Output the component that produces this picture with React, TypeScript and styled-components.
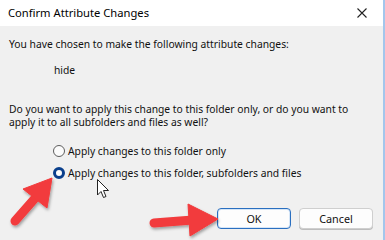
import React from 'react';
import styled, { createGlobalStyle } from 'styled-components';

const Global = createGlobalStyle`
    html, body {
        margin: 0;
        padding: 0;
        background: #f0f0f0;
    }
    body {
        font-family: "Noto Sans", "Liberation Sans", sans-serif;
        font-size: 10.3px;
        color: #111;
    }
`
const Dialog = styled.div`
    position: relative;
    width: 385px;
    height: 240px;
    box-sizing: border-box;
    border-right: 2px solid #a3c6ec;
    background: #f0f0f0;
    display: flex;
    flex-direction: column;
    overflow: hidden;
`
const TitleBar = styled.div`
    height: 26px;
    flex: none;
    background: #ffffff;
    display: flex;
    align-items: center;
    justify-content: space-between;
    padding: 0 8px 1px 8px;
    box-sizing: border-box;
    font-size: 11.2px;
    color: #000;
`
const CloseBox = styled.div`
    width: 20px;
    height: 20px;
    display: flex;
    align-items: center;
    justify-content: center;
    margin-right: 3px;
`
const Body = styled.div`
    padding: 11px 0 0 9px;
    display: flex;
    flex-direction: column;
`
const Line = styled.div`
    line-height: 14px;
    white-space: nowrap;
`
const Attr = styled(Line)`
    margin-top: 12px;
    padding-left: 45px;
`
const Question = styled.div`
    margin-top: 26px;
    line-height: 13px;
    white-space: nowrap;
`
const Options = styled.div`
    margin-top: 14px;
    padding-left: 44px;
    display: flex;
    flex-direction: column;
    gap: 6px;
`
const Option = styled.label`
    height: 16px;
    display: flex;
    align-items: center;
    gap: 3px;
    white-space: nowrap;
`
const Dot = styled.span<{ $checked?: boolean }>`
    width: 12px;
    height: 12px;
    box-sizing: border-box;
    border-radius: 50%;
    background: #fbfbfb;
    border: ${p => (p.$checked ? '3px solid #0a3f8c' : '1px solid #5d5d5d')};
    flex: none;
`
const Buttons = styled.div`
    margin-top: 27px;
    padding-right: 10px;
    display: flex;
    justify-content: flex-end;
    gap: 8px;
`
const Button = styled.div<{ $primary?: boolean }>`
    width: 74px;
    height: 21px;
    box-sizing: border-box;
    border-radius: 4px;
    background: #fdfdfd;
    border: 1px solid ${p => (p.$primary ? '#2a6fc0' : '#cfcfcf')};
    box-shadow: ${p => (p.$primary ? 'inset 0 0 0 1px #d6e6f7' : '0 1px 0 #bdbdbd')};
    display: flex;
    align-items: center;
    justify-content: center;
    font-size: 10.8px;
    color: #111;
`
const Overlay = styled.svg`
    position: absolute;
    left: 0;
    top: 0;
    pointer-events: none;
`

const App = () => {
    return (
        <>
            <Global />
            <Dialog>
                <TitleBar>
                    <span>Confirm Attribute Changes</span>
                    <CloseBox>
                        <svg width="10" height="10" viewBox="0 0 10 10">
                            <path d="M0.5 0.5 L9.5 9.5 M9.5 0.5 L0.5 9.5" stroke="#222" strokeWidth="1.1" />
                        </svg>
                    </CloseBox>
                </TitleBar>
                <Body>
                    <Line>You have chosen to make the following attribute changes:</Line>
                    <Attr>hide</Attr>
                    <Question>
                        Do you want to apply this change to this folder only, or do you want to
                        <br />
                        apply it to all subfolders and files as well?
                    </Question>
                    <Options>
                        <Option><Dot />Apply changes to this folder only</Option>
                        <Option><Dot $checked />Apply changes to this folder, subfolders and files</Option>
                    </Options>
                    <Buttons>
                        <Button $primary>OK</Button>
                        <Button>Cancel</Button>
                    </Buttons>
                </Body>
                <Overlay width="385" height="240" viewBox="0 0 385 240">
                    <defs>
                        <filter id="sh" x="-30%" y="-30%" width="160%" height="160%">
                            <feDropShadow dx="1" dy="2" stdDeviation="1.5" floodColor="#000" floodOpacity="0.35" />
                        </filter>
                    </defs>
                    <g fill="#f23b3c" stroke="#f23b3c" filter="url(#sh)">
                        <line x1="15" y1="221" x2="37" y2="196" strokeWidth="9" strokeLinecap="round" />
                        <polygon points="52,178 23,189 47,208" strokeWidth="1" strokeLinejoin="round" />
                        <line x1="154" y1="223" x2="193" y2="220" strokeWidth="9" strokeLinecap="round" />
                        <polygon points="188,204 218,219 190,236" strokeWidth="1" strokeLinejoin="round" />
                    </g>
                    <path
                        d="M97.5 179.5 L97.5 195 L101 191.5 L103.5 197.5 L106 196.5 L103.5 190.5 L108.5 190.5 Z"
                        fill="#fff"
                        stroke="#222"
                        strokeWidth="1"
                        strokeLinejoin="round"
                    />
                </Overlay>
            </Dialog>
        </>
    );
};

export default App;
